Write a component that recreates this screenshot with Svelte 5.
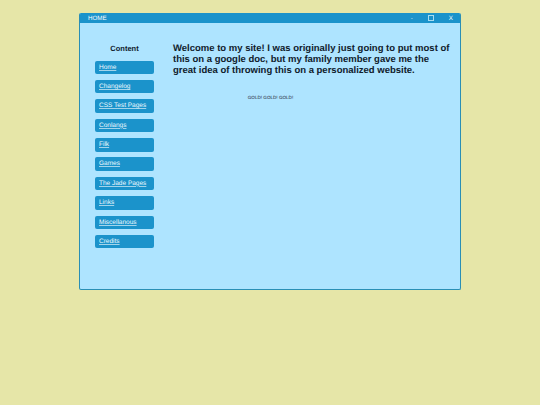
<script>
  const links = ['Home', 'Changelog', 'CSS Test Pages', 'Conlangs', 'Filk', 'Games', 'The Jade Pages', 'Links', 'Miscellanous', 'Credits'];
</script>

<div class="page">
  <div class="window">
    <div class="titlebar">
      <span class="title">HOME</span>
      <div class="controls">
        <span class="min">-</span>
        <span class="max"></span>
        <span class="close">X</span>
      </div>
    </div>
    <div class="body">
      <nav class="sidebar">
        <h2>Content</h2>
        {#each links as link}
          <div class="link"><a href="#top">{link}</a></div>
        {/each}
      </nav>
      <main class="content">
        <h1>Welcome to my site! I was originally just going to put most of this on a google doc, but my family member gave me the great idea of throwing this on a personalized website.</h1>
        <p>GOLD! GOLD! GOLD!</p>
      </main>
    </div>
  </div>
</div>

<style>
  :global(body) {
    margin: 0;
    background: #e6e6a8;
    font-family: "Liberation Sans", Arial, sans-serif;
    text-rendering: geometricPrecision;
  }

  .page {
    height: 405px;
    padding-top: 13px;
    box-sizing: border-box;
  }

  .window {
    width: 382px;
    height: 277px;
    margin-left: 79px;
    box-sizing: border-box;
    background: #aee4ff;
    border: 1px solid #2a8fb5;
    border-top: none;
    border-radius: 2px;
    overflow: hidden;
  }

  .titlebar {
    height: 10px;
    background: #1b93cb;
    color: #fff;
    font-size: 6.2px;
    line-height: 11px;
    display: flex;
    justify-content: space-between;
    padding: 0 7px 0 8px;
  }

  .controls {
    display: flex;
    align-items: center;
    gap: 15px;
  }

  .min {
    opacity: 0.7;
  }

  .max {
    width: 4px;
    height: 4px;
    border: 0.5px solid #a8dcf0;
  }

  .body {
    display: flex;
  }

  .sidebar {
    width: 59px;
    margin-left: 15px;
    padding-top: 21px;
  }

  h2 {
    margin: 0 0 7.7px;
    font-size: 7.5px;
    line-height: 9px;
    text-align: center;
    color: #10202c;
  }

  .link {
    height: 13.4px;
    margin-bottom: 5.97px;
    background: #1b93cb;
    border-radius: 2px;
    padding-left: 4px;
    font-size: 6.5px;
    line-height: 14.2px;
  }

  .link a {
    color: #f0faff;
    text-decoration-color: rgba(255, 255, 255, 0.6);
    text-decoration-thickness: 0.5px;
  }

  .content {
    margin-left: 19px;
    width: 280px;
    padding-top: 20px;
  }

  h1 {
    margin: 0;
    font-size: 9.5px;
    line-height: 11px;
    color: #10202c;
  }

  p {
    margin: 19px 0 0;
    font-size: 4.6px;
    line-height: 5px;
    text-align: center;
    color: #223;
    padding-right: 85px;
  }
</style>
